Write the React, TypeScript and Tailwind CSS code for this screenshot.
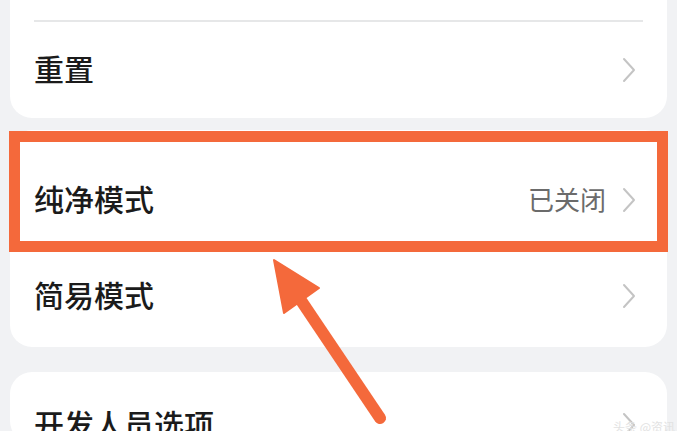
import type { ReactElement } from 'react';

const ORANGE = '#f4693b';

function Chevron(): ReactElement {
  return (
    <svg width="14" height="26" viewBox="0 0 14 26" className="shrink-0">
      <path d="M2 2 L12 13 L2 24" fill="none" stroke="#c4c4c4" strokeWidth="2" strokeLinecap="round" strokeLinejoin="round" />
    </svg>
  );
}

function Row({ label, value, height }: { label: string; value?: string; height: string }): ReactElement {
  return (
    <div className={`flex items-center justify-between pl-[24px] pr-[31px] ${height}`}>
      <span className="pb-[5px] text-[30px] font-medium leading-none text-[#1b1b1b]">{label}</span>
      <div className="flex items-center gap-[16px]">
        {value && <span className="pb-[3px] text-[26px] leading-none text-[#6b6b6b]">{value}</span>}
        <Chevron />
      </div>
    </div>
  );
}

export default function App(): ReactElement {
  return (
    <div
      className="relative w-[677px] h-[431px] overflow-hidden bg-[#f1f2f4]"
      style={{ fontFamily: '"Noto Sans CJK SC", "Noto Sans", sans-serif' }}
    >
      <div className="flex flex-col px-[10px]">
        {/* top card, cut off above */}
        <div className="-mt-[60px] rounded-[22px] bg-white">
          <div className="h-[80px]" />
          <div className="mx-[24px] h-[2px] bg-[#e6e7e8]" />
          <Row label="重置" height="h-[96px]" />
        </div>

        {/* middle card */}
        <div className="mt-[12px] flex flex-col rounded-[22px] bg-white pt-[22px] pb-[3px]">
          <Row label="纯净模式" value="已关闭" height="h-[96px]" />
          <Row label="简易模式" height="h-[96px]" />
        </div>

        {/* bottom card */}
        <div className="mt-[25px] flex flex-col rounded-[22px] bg-white pt-[35px]">
          <Row label="开发人员选项" height="h-[36px]" />
        </div>
      </div>

      {/* highlight frame */}
      <div
        className="absolute left-[9px] top-[131px] h-[121px] w-[659px] border-[11px]"
        style={{ borderColor: ORANGE }}
      />

      {/* arrow */}
      <svg className="absolute left-0 top-0" width="677" height="431" viewBox="0 0 677 431">
        <line x1="298" y1="296" x2="380" y2="418" stroke={ORANGE} strokeWidth="12" strokeLinecap="round" />
        <polygon points="274,260 284,313 319,288" fill={ORANGE} stroke={ORANGE} strokeWidth="2" strokeLinejoin="round" />
      </svg>

      {/* faint watermark */}
      <div className="absolute right-[2px] top-[421px] text-[12px] leading-none text-[#e2e2e2]">头条 @资讯</div>
    </div>
  );
}
